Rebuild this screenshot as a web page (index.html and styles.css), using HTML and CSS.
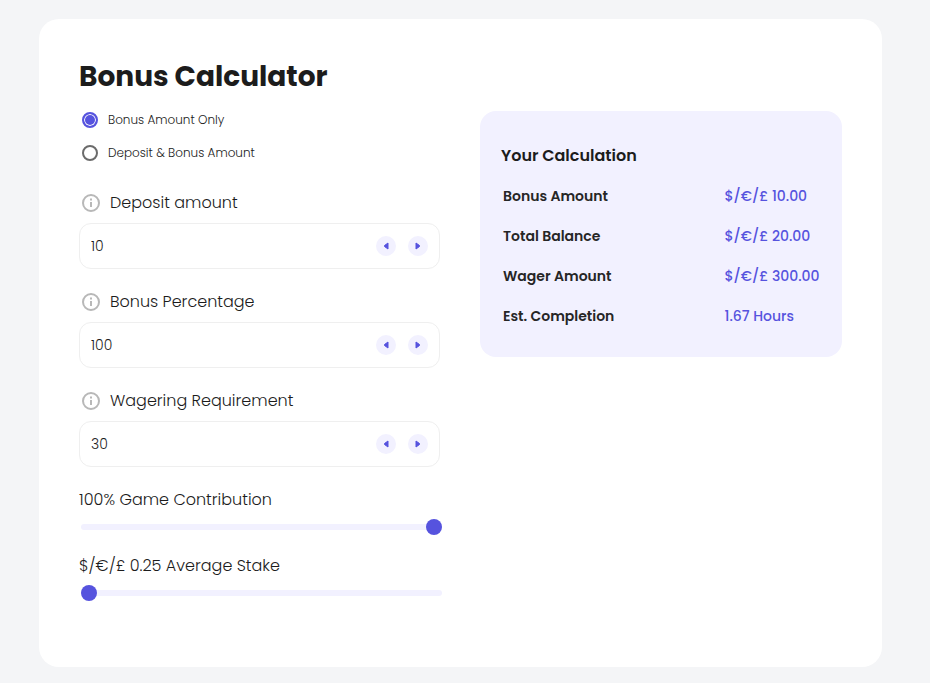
FILE: index.html
```html
<!DOCTYPE html>
<html lang="en">
<head>
<meta charset="utf-8">
<meta name="viewport" content="width=device-width, initial-scale=1">
<title>Bonus Calculator</title>
<link rel="stylesheet" href="styles.css">
</head>
<body>
<main class="card">
  <h1 class="title">Bonus Calculator</h1>
  <div class="columns">
    <form class="form">
      <div class="options">
        <label class="option"><input class="radio" type="radio" name="mode" checked>Bonus Amount Only</label>
        <label class="option"><input class="radio" type="radio" name="mode">Deposit &amp; Bonus Amount</label>
      </div>
      <div class="fields">
        <div class="field">
          <label class="field-label" for="deposit">
            <svg class="info" viewBox="0 0 18 18" aria-hidden="true"><circle cx="9" cy="9" r="8"/><path d="M9 8v5M9 4.500v2"/></svg>
            Deposit amount
          </label>
          <div class="stepper">
            <input class="number" id="deposit" type="text" inputmode="numeric" value="10">
            <button class="step" type="button" aria-label="Decrease deposit"><svg viewBox="0 0 20 20"><path d="M12 7v6L8.500 10.500v-1z"/></svg></button>
            <button class="step" type="button" aria-label="Increase deposit"><svg viewBox="0 0 20 20"><path d="M8 7v6l3.500-2.500v-1z"/></svg></button>
          </div>
        </div>
        <div class="field">
          <label class="field-label" for="percentage">
            <svg class="info" viewBox="0 0 18 18" aria-hidden="true"><circle cx="9" cy="9" r="8"/><path d="M9 8v5M9 4.500v2"/></svg>
            Bonus Percentage
          </label>
          <div class="stepper">
            <input class="number" id="percentage" type="text" inputmode="numeric" value="100">
            <button class="step" type="button" aria-label="Decrease percentage"><svg viewBox="0 0 20 20"><path d="M12 7v6L8.500 10.500v-1z"/></svg></button>
            <button class="step" type="button" aria-label="Increase percentage"><svg viewBox="0 0 20 20"><path d="M8 7v6l3.500-2.500v-1z"/></svg></button>
          </div>
        </div>
        <div class="field">
          <label class="field-label" for="wagering">
            <svg class="info" viewBox="0 0 18 18" aria-hidden="true"><circle cx="9" cy="9" r="8"/><path d="M9 8v5M9 4.500v2"/></svg>
            Wagering Requirement
          </label>
          <div class="stepper">
            <input class="number" id="wagering" type="text" inputmode="numeric" value="30">
            <button class="step" type="button" aria-label="Decrease wagering"><svg viewBox="0 0 20 20"><path d="M12 7v6L8.500 10.500v-1z"/></svg></button>
            <button class="step" type="button" aria-label="Increase wagering"><svg viewBox="0 0 20 20"><path d="M8 7v6l3.500-2.500v-1z"/></svg></button>
          </div>
        </div>
      </div>
      <div class="sliders">
        <div class="slider">
          <label class="slider-label" for="contribution">100% Game Contribution</label>
          <input class="range" id="contribution" type="range" min="0" max="100" value="100">
        </div>
        <div class="slider">
          <label class="slider-label" for="stake">$/€/£ 0.25 Average Stake</label>
          <input class="range" id="stake" type="range" min="0.25" max="100" step="0.25" value="0.25">
        </div>
      </div>
    </form>
    <section class="result">
      <h2 class="result-title">Your Calculation</h2>
      <table class="result-table">
        <tbody>
          <tr><th scope="row">Bonus Amount</th><td>$/€/£ 10.00</td></tr>
          <tr><th scope="row">Total Balance</th><td>$/€/£ 20.00</td></tr>
          <tr><th scope="row">Wager Amount</th><td>$/€/£ 300.00</td></tr>
          <tr><th scope="row">Est. Completion</th><td>1.67 Hours</td></tr>
        </tbody>
      </table>
    </section>
  </div>
</main>
</body>
</html>
```
FILE: styles.css
```css
:root {
  --accent: #5653de;
  --tint: #f2f1ff;
  --text: #1c1c1c;
}

* {
  box-sizing: border-box;
}

body {
  margin: 0;
  padding: 19px 48px 16px 39px;
  background: #f4f5f7;
  color: var(--text);
  font-family: Poppins, Inter, "Open Sans", sans-serif;
  font-weight: 300;
}

.card {
  padding: 40px 40px 65px;
  background: #fff;
  border-radius: 20px;
}

.title {
  margin: 0 0 16px;
  font-size: 28px;
  line-height: 36px;
  font-weight: 700;
}

.columns {
  display: grid;
  grid-template-columns: 361fr 362fr;
  gap: 40px;
  align-items: start;
}

.options {
  display: grid;
  gap: 15px;
  margin-bottom: 29px;
}

.option {
  display: flex;
  align-items: center;
  gap: 10px;
  padding-left: 3px;
  font-size: 12px;
  line-height: 18px;
}

.radio {
  appearance: none;
  width: 16px;
  height: 16px;
  margin: 0;
  border: 2px solid #6b6b6b;
  border-radius: 50%;
  background: #fff;
}

.radio:checked {
  border-color: var(--accent);
  background: var(--accent);
  box-shadow: inset 0 0 0 1px #fff;
}

.fields {
  display: grid;
  gap: 21px;
  margin-bottom: 21px;
}

.field {
  display: grid;
  gap: 8px;
}

.field-label {
  display: flex;
  align-items: center;
  gap: 10px;
  padding-left: 3px;
  font-size: 16px;
  line-height: 24px;
}

.info {
  width: 18px;
  height: 18px;
  fill: none;
  stroke: #b8b8b8;
  stroke-width: 2;
}

.stepper {
  display: flex;
  align-items: center;
  gap: 12px;
  height: 46px;
  padding: 0 11px;
  border: 1px solid #efefef;
  border-radius: 12px;
}

.number {
  flex: 1;
  min-width: 0;
  padding: 0;
  border: 0;
  outline: 0;
  background: none;
  color: inherit;
  font: 300 14px/20px Poppins, Inter, "Open Sans", sans-serif;
}

.step {
  width: 20px;
  height: 20px;
  padding: 0;
  border: 0;
  border-radius: 50%;
  background: var(--tint);
}

.step svg {
  display: block;
  fill: var(--accent);
  stroke: var(--accent);
  stroke-linejoin: round;
}

.sliders {
  display: grid;
  gap: 18px;
}

.slider {
  display: grid;
  gap: 6px;
}

.slider-label {
  font-size: 16px;
  line-height: 24px;
}

.range {
  appearance: none;
  width: 100%;
  height: 18px;
  margin: 0 2px;
  background: none;
}

.range::-webkit-slider-runnable-track {
  height: 6px;
  border-radius: 3px;
  background: var(--tint);
}

.range::-webkit-slider-thumb {
  appearance: none;
  width: 16px;
  height: 16px;
  margin-top: -5px;
  border-radius: 50%;
  background: var(--accent);
}

.result {
  padding: 33px 20px 21px 21px;
  background: var(--tint);
  border-radius: 16px;
}

.result-title {
  margin: 0 0 8px;
  font-size: 16px;
  line-height: 24px;
  font-weight: 600;
}

.result-table {
  width: 100%;
  border-collapse: collapse;
  font-size: 14px;
  line-height: 20px;
}

.result-table th,
.result-table td {
  padding: 10px 0 10px 2px;
  text-align: left;
  white-space: nowrap;
}

.result-table th {
  width: 69%;
  color: #262626;
  font-weight: 600;
}

.result-table td {
  color: var(--accent);
  font-weight: 500;
}
```
